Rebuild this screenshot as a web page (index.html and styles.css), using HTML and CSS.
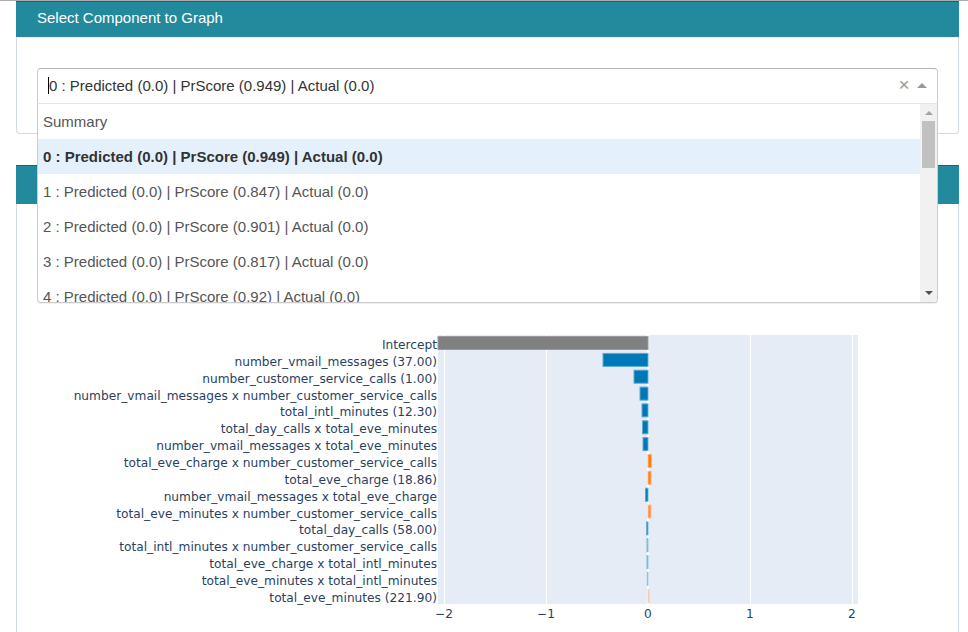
FILE: index.html
```html
<!DOCTYPE html>
<html>
<head>
<meta charset="utf-8">
<link rel="stylesheet" href="styles.css">
</head>
<body>
<div class="topline"></div>
<div class="page">
  <section class="card card-select">
    <div class="card-header">Select Component to Graph</div>
    <div class="card-body">
      <div class="select">
        <div class="select-control">
          <span class="cursor"></span><span class="value">0 : Predicted (0.0) | PrScore (0.949) | Actual (0.0)</span>
          <span class="clear">×</span>
          <span class="arrow"></span>
        </div>
        <div class="menu">
          <div class="options">
            <div class="option">Summary</div>
            <div class="option selected">0 : Predicted (0.0) | PrScore (0.949) | Actual (0.0)</div>
            <div class="option">1 : Predicted (0.0) | PrScore (0.847) | Actual (0.0)</div>
            <div class="option">2 : Predicted (0.0) | PrScore (0.901) | Actual (0.0)</div>
            <div class="option">3 : Predicted (0.0) | PrScore (0.817) | Actual (0.0)</div>
            <div class="option">4 : Predicted (0.0) | PrScore (0.92) | Actual (0.0)</div>
          </div>
          <div class="scrollbar">
            <div class="sb-btn"><span class="tri-up"></span></div>
            <div class="sb-thumb"></div>
            <div class="sb-track"></div>
            <div class="sb-btn"><span class="tri-down"></span></div>
          </div>
        </div>
      </div>
    </div>
  </section>

  <section class="card card-graph">
    <div class="card-header card-header-tall"></div>
    <div class="card-body graph-body">
      <svg class="chart" width="941" height="310" viewBox="0 0 941 310" xmlns="http://www.w3.org/2000/svg">
        <rect x="421" y="16" width="420" height="269" fill="#e5ecf6"/>
        <g stroke="#ffffff" stroke-width="1">
          <line x1="427.5" y1="16" x2="427.5" y2="285"/>
          <line x1="529.5" y1="16" x2="529.5" y2="285"/>
          <line x1="733.5" y1="16" x2="733.5" y2="285"/>
          <line x1="835.5" y1="16" x2="835.5" y2="285"/>
        </g>
        <line x1="631" y1="16" x2="631" y2="285" stroke="#ffffff" stroke-width="2"/>
        <g stroke-width="1">
          <rect x="421" y="17.5" width="210" height="13" fill="#808080" stroke="#9a9a9a"/>
          <rect x="586" y="34.4" width="45" height="13" fill="#0077b6" stroke="#5fa9d4"/>
          <rect x="617" y="51.2" width="14" height="13" fill="#0077b6" stroke="#5fa9d4"/>
          <rect x="623" y="68.1" width="8" height="13" fill="#0077b6" stroke="#5fa9d4"/>
          <rect x="625" y="84.9" width="6" height="13" fill="#0077b6" stroke="#5fa9d4"/>
          <rect x="625.5" y="101.8" width="5.5" height="13" fill="#0077b6" stroke="#5fa9d4"/>
          <rect x="626" y="118.6" width="5" height="13" fill="#0077b6" stroke="#5fa9d4"/>
          <rect x="631" y="135.5" width="3.5" height="13" fill="#ff7f0e" stroke="#ffb074"/>
          <rect x="631" y="152.3" width="3" height="13" fill="#ff7f0e" stroke="#ffb074"/>
          <rect x="628.5" y="169.2" width="2.5" height="13" fill="#0077b6" stroke="#5fa9d4"/>
          <rect x="631" y="186" width="3" height="13" fill="#ff8f30" stroke="#ffc090"/>
          <rect x="629.5" y="202.9" width="1.5" height="13" fill="#1a86c0" stroke="#6aaed6"/>
          <rect x="630" y="219.7" width="1" height="13" fill="#3a97c8" stroke="#80bbdc"/>
          <rect x="630" y="236.6" width="1" height="13" fill="#3a97c8" stroke="#80bbdc"/>
          <rect x="630.3" y="253.4" width="0.7" height="13" fill="#5aa6d0" stroke="#8fc3e0"/>
          <rect x="631" y="270.3" width="1.5" height="13" fill="#f6c3a0" stroke="#f9d6be"/>
        </g>
        <g class="ylab" text-anchor="end">
          <text x="420" y="30">Intercept</text>
          <text x="420" y="46.9">number_vmail_messages (37.00)</text>
          <text x="420" y="63.7">number_customer_service_calls (1.00)</text>
          <text x="420" y="80.6">number_vmail_messages x number_customer_service_calls</text>
          <text x="420" y="97.4">total_intl_minutes (12.30)</text>
          <text x="420" y="114.3">total_day_calls x total_eve_minutes</text>
          <text x="420" y="131.1">number_vmail_messages x total_eve_minutes</text>
          <text x="420" y="148">total_eve_charge x number_customer_service_calls</text>
          <text x="420" y="164.8">total_eve_charge (18.86)</text>
          <text x="420" y="181.7">number_vmail_messages x total_eve_charge</text>
          <text x="420" y="198.5">total_eve_minutes x number_customer_service_calls</text>
          <text x="420" y="215.4">total_day_calls (58.00)</text>
          <text x="420" y="232.2">total_intl_minutes x number_customer_service_calls</text>
          <text x="420" y="249.1">total_eve_charge x total_intl_minutes</text>
          <text x="420" y="265.9">total_eve_minutes x total_intl_minutes</text>
          <text x="420" y="282.8">total_eve_minutes (221.90)</text>
        </g>
        <g class="xlab" text-anchor="middle">
          <text x="427" y="299">−2</text>
          <text x="529" y="299">−1</text>
          <text x="631" y="299">0</text>
          <text x="733" y="299">1</text>
          <text x="835" y="299">2</text>
        </g>
      </svg>
    </div>
  </section>
</div>
</body>
</html>
```

FILE: styles.css
```css
* { box-sizing: border-box; }

html, body {
  margin: 0;
  padding: 0;
  background: #ffffff;
  height: 632px;
  overflow: hidden;
}

body {
  font-family: "Liberation Sans", Arial, sans-serif;
  color: #333333;
}

.topline {
  height: 1px;
  background: #a8adb3;
}

.page {
  padding: 0 9px 0 16px;
}

.card {
  border: 1px solid #d3dae7;
  border-top: none;
  background: #ffffff;
  border-radius: 0 0 4px 4px;
}

.card-header {
  margin: 0 -1px;
  height: 36px;
  background: #23899d;
  border-top: 1px solid #1b6372;
  color: #ffffff;
  font-size: 15px;
  line-height: 31px;
  padding-left: 21px;
}

.card-select .card-body {
  padding: 31px 20px 29px 20px;
}

.select {
  position: relative;
}

.select-control {
  height: 36px;
  border: 1px solid;
  border-color: #b3b3b3 #cccccc #e6e6e6 #cccccc;
  border-radius: 4px 4px 0 0;
  display: flex;
  align-items: center;
  padding-left: 10px;
  padding-bottom: 2px;
  font-size: 15px;
  color: #333333;
}

.cursor {
  width: 1px;
  height: 17px;
  background: #000000;
}

.value {
  flex: 1;
  white-space: nowrap;
}

.clear {
  color: #999999;
  font-size: 19px;
  line-height: 1;
  width: 14px;
  text-align: center;
  margin-right: 6px;
  margin-top: -1px;
}

.arrow {
  width: 0;
  height: 0;
  border-style: solid;
  border-width: 0 5px 5px 5px;
  border-color: transparent transparent #999999 transparent;
  margin-right: 10px;
  margin-top: 1px;
}

.menu {
  position: absolute;
  top: 100%;
  left: 0;
  right: 0;
  height: 199px;
  border: 1px solid #cccccc;
  border-top: none;
  border-radius: 0 0 4px 4px;
  background: #ffffff;
  display: flex;
  overflow: hidden;
  z-index: 10;
  box-shadow: 0 1px 0 rgba(0, 0, 0, 0.06);
}

.options {
  flex: 1;
  overflow: hidden;
}

.option {
  height: 35px;
  line-height: 35px;
  padding-left: 5px;
  font-size: 15px;
  color: #555555;
  white-space: nowrap;
}

.option.selected {
  background: #e4f1fd;
  font-weight: bold;
  color: #333333;
}

.scrollbar {
  width: 17px;
  background: #f1f1f1;
  display: flex;
  flex-direction: column;
  align-items: center;
}

.sb-btn {
  height: 17px;
  width: 17px;
  display: flex;
  align-items: center;
  justify-content: center;
  flex: none;
}

.tri-up {
  width: 0;
  height: 0;
  border-style: solid;
  border-width: 0 4px 4px 4px;
  border-color: transparent transparent #a3a3a3 transparent;
}

.tri-down {
  width: 0;
  height: 0;
  border-style: solid;
  border-width: 4px 4px 0 4px;
  border-color: #505050 transparent transparent transparent;
  margin-top: -2px;
}

.sb-thumb {
  width: 13px;
  height: 47px;
  background: #c1c1c1;
  flex: none;
}

.sb-track {
  flex: 1;
}

.card-graph {
  margin-top: 31px;
  height: 700px;
}

.card-header-tall {
  height: 39px;
}

.graph-body {
  padding-top: 115px;
}

.chart {
  display: block;
}

.ylab text,
.xlab text {
  font-family: "DejaVu Sans", Verdana, sans-serif;
  font-size: 12.2px;
  fill: #2a3f5f;
}
```
